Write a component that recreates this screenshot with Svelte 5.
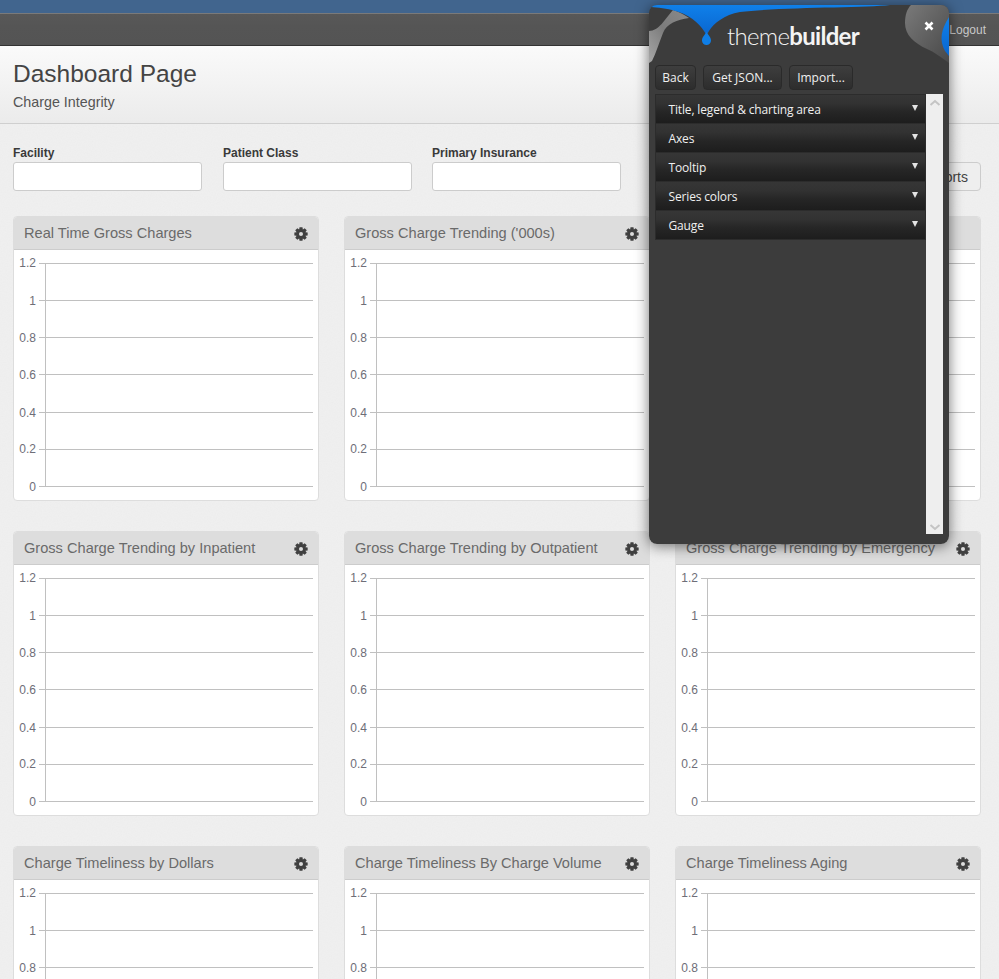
<script>
  const titles = [
    'Real Time Gross Charges', 'Gross Charge Trending (\'000s)', '',
    'Gross Charge Trending by Inpatient', 'Gross Charge Trending by Outpatient', 'Gross Charge Trending by Emergency',
    'Charge Timeliness by Dollars', 'Charge Timeliness By Charge Volume', 'Charge Timeliness Aging'
  ];
  const allTicks = [
    { label: '1.2', y: 14, base: 18 }, { label: '1', y: 51, base: 56 }, { label: '0.8', y: 88, base: 93 }, { label: '0.6', y: 125, base: 130 },
    { label: '0.4', y: 163, base: 168 }, { label: '0.2', y: 200, base: 204 }, { label: '0', y: 237, base: 242 }
  ];
  const cards = titles.map((title, i) => ({
    title,
    gear: i !== 2,
    ticks: i >= 6 ? allTicks.slice(0, 3) : allTicks
  }));
  const sections = ['Title, legend & charting area', 'Axes', 'Tooltip', 'Series colors', 'Gauge'];

  function gearPath() {
    const teeth = 8, cx = 8, cy = 8, ro = 7.8, ri = 5.6, hole = 2.3;
    let d = '';
    for (let t = 0; t < teeth; t++) {
      const a = (t / teeth) * Math.PI * 2;
      const w = 0.22, g = 0.17;
      const pts = [[ri, a - w - g], [ro, a - w], [ro, a + w], [ri, a + w + g]];
      for (const [r, an] of pts) {
        d += (d ? 'L' : 'M') + (cx + r * Math.sin(an)).toFixed(2) + ' ' + (cy - r * Math.cos(an)).toFixed(2);
      }
    }
    d += 'Z';
    d += `M${cx + hole} ${cy}A${hole} ${hole} 0 1 0 ${cx - hole} ${cy}A${hole} ${hole} 0 1 0 ${cx + hole} ${cy}Z`;
    return d;
  }
  const gear = gearPath();
</script>

<div class="page">
  <svg class="noise" width="999" height="979" aria-hidden="true">
    <filter id="grain">
      <feTurbulence type="fractalNoise" baseFrequency="0.8" numOctaves="2" seed="4" />
      <feColorMatrix values="0.33 0.33 0.33 0 0  0.33 0.33 0.33 0 0  0.33 0.33 0.33 0 0  0 0 0 0 1" />
    </filter>
    <rect width="999" height="979" filter="url(#grain)" />
  </svg>
  <div class="topbar"></div>
  <nav class="navbar"><span class="logout">Logout</span></nav>
  <header class="head">
    <h1>Dashboard Page</h1>
    <p>Charge Integrity</p>
  </header>

  <main class="content">
    <section class="filters">
      <div class="field"><span class="lab">Facility</span><div class="input"></div></div>
      <div class="field"><span class="lab">Patient Class</span><div class="input"></div></div>
      <div class="field"><span class="lab">Primary Insurance</span><div class="input"></div></div>
      <button class="reports">Reports</button>
    </section>

    <section class="grid">
      {#each cards as card}
        <article class="card">
          <div class="card-head">
            <span class="card-title">{card.title}</span>
            {#if card.gear}
              <svg class="gear" viewBox="0 0 16 16" width="14" height="14"><path d={gear} fill-rule="evenodd" /></svg>
            {/if}
          </div>
          <div class="card-body">
            <svg class="chart" width="304" height="251" viewBox="0 0 304 251">
              <line class="rule" x1="31.5" x2="31.5" y1="14" y2="237" />
              {#each card.ticks as t}
                <line class="rule" x1="25" x2="299" y1={t.y + 0.5} y2={t.y + 0.5} />
                <text class="tick" x="22" y={t.base}>{t.label}</text>
              {/each}
            </svg>
          </div>
        </article>
      {/each}
    </section>
  </main>

  <aside class="tb">
    <svg class="tb-art" width="300" height="70" viewBox="0 0 300 70">
      <defs>
        <linearGradient id="blue" x1="0" y1="0" x2="0" y2="1">
          <stop offset="0" stop-color="#0f80ea" />
          <stop offset="1" stop-color="#0a66cf" />
        </linearGradient>
        <linearGradient id="g1" x1="0" y1="1" x2="1" y2="0">
          <stop offset="0" stop-color="#a8a8a8" />
          <stop offset="0.5" stop-color="#7c7c7c" />
          <stop offset="1" stop-color="#8a8a8a" />
        </linearGradient>
        <linearGradient id="g2" x1="0" y1="0" x2="1" y2="1">
          <stop offset="0" stop-color="#7a7a7a" />
          <stop offset="1" stop-color="#484848" />
        </linearGradient>
      </defs>
      <path d="M0 26C10 26 16 14 24 5C32 8 36 10 40 13C28 15 18 18 14 28C10 38 7 48 3 56L0 58Z" fill="url(#g1)" />
      <path d="M262 0H300V58C292 52 285 47 278 44C265 38 256 30 256 18C256 10 258 4 262 0Z" fill="url(#g2)" />
      <path d="M300 12C292 25 290 35 296 46L300 51Z" fill="url(#blue)" />
      <path d="M0 0H241C215 3 130 2 91 7C75 10 65 18 60 26L57.5 30L55 26C50 18 40 9 23 5C15 3 5 2 0 2Z" fill="url(#blue)" />
      <path d="M57.5 27C59 30 62 32 62 35.500A4.500 4.500 0 0 1 53 35.500C53 32 56 30 57.500 27Z" fill="#0f7ee6" />
    </svg>
    <div class="tb-logo"><span class="thin">theme</span><span class="bold">builder</span></div>
    <svg class="tb-close" width="10" height="10" viewBox="0 0 10 10"><path d="M1.500 1.500L8.500 8.500M8.500 1.500L1.500 8.500" stroke="#fff" stroke-width="2.600" /></svg>

    <div class="tb-actions">
      <button class="tb-btn back">Back</button>
      <button class="tb-btn json">Get JSON...</button>
      <button class="tb-btn imp">Import...</button>
    </div>

    <div class="tb-main">
      <div class="tb-list">
        {#each sections as s}
          <div class="tb-row"><span>{s}</span><i class="tri"></i></div>
        {/each}
      </div>
      <div class="tb-scroll">
        <svg width="12" height="8" viewBox="0 0 12 8"><path d="M1.500 6L6 2L10.500 6" fill="none" stroke="#c4c4c4" stroke-width="2" /></svg>
        <svg width="12" height="8" viewBox="0 0 12 8"><path d="M1.500 2L6 6L10.500 2" fill="none" stroke="#c4c4c4" stroke-width="2" /></svg>
      </div>
    </div>
  </aside>
</div>

<style>
  :global(html), :global(body) { margin: 0; overflow: hidden; }
  .page {
    position: relative;
    isolation: isolate;
    width: 999px;
    height: 979px;
    overflow: hidden;
    background: #f1f1f1;
    font-family: "Liberation Sans", Arial, sans-serif;
  }
  .noise { position: absolute; left: 0; top: 0; z-index: -1; opacity: 0.035; }
  .topbar {
    height: 13px;
    background: #41658e;
    border-bottom: 1px solid #2f3d4c;
  }
  .navbar {
    height: 31px;
    background: linear-gradient(#585858, #555 40%, #545454);
    border-top: 1px solid #7a7a7a;
    border-bottom: 1px solid #333;
    margin-top: -1px;
    display: flex;
    justify-content: flex-end;
    align-items: center;
    padding-right: 13px;
  }
  .logout { color: #c8c8c8; font-size: 12px; }
  .head {
    height: 78px;
    box-sizing: border-box;
    padding: 14px 13px 0;
    background: linear-gradient(#fafafa, #ebebeb);
    border-bottom: 1px solid #cfcfcf;
  }
  h1 { margin: 0; font-size: 24.5px; line-height: 28px; font-weight: 400; color: #444; }
  .head p { margin: 5px 0 0; font-size: 14.3px; line-height: 18px; color: #555; }
  .content { padding: 0 18px 0 13px; }
  .filters {
    display: flex;
    align-items: flex-end;
    gap: 21px;
    padding-top: 21px;
    height: 46px;
  }
  .field { width: 189px; display: flex; flex-direction: column; }
  .field + .field + .field { margin-left: -1px; }
  .lab { font-size: 12px; line-height: 16px; font-weight: 700; color: #3a3a3a; margin-bottom: 1px; }
  .input {
    height: 27px;
    background: #fff;
    border: 1px solid #ccc;
    border-radius: 3px;
  }
  .reports {
    margin-left: auto;
    height: 29px;
    width: 90px;
    padding: 0 12px;
    text-align: right;
    background: #eee;
    border: 1px solid #ccc;
    border-radius: 4px;
    font: 14px "Liberation Sans", Arial, sans-serif;
    color: #444;
  }
  .grid {
    display: grid;
    grid-template-columns: repeat(3, 306px);
    column-gap: 25px;
    row-gap: 30px;
    margin-top: 25px;
  }
  .card {
    height: 285px;
    box-sizing: border-box;
    border: 1px solid #ddd;
    border-radius: 4px;
    overflow: hidden;
    background: #fff;
  }
  .card-head {
    height: 33px;
    box-sizing: border-box;
    background: #dddddd;
    border-bottom: 1px solid #ccc;
    display: flex;
    align-items: center;
    justify-content: space-between;
    padding: 0 10px;
  }
  .card-title { font-size: 14.6px; color: #6a6a6a; }
  .gear { fill: #404040; margin-top: 2px; }
  .card-body { height: 250px; }
  .chart { display: block; margin-top: -1px; }
  .rule { stroke: #c0c0c0; stroke-width: 1; }
  .tick {
    font-family: "Liberation Sans", Arial, sans-serif;
    font-size: 12px;
    fill: #6e6e78;
    text-anchor: end;
  }

  .tb {
    position: absolute;
    left: 649px;
    top: 5px;
    z-index: 1;
    width: 300px;
    height: 539px;
    box-sizing: border-box;
    background: #3c3c3c;
    border-radius: 8px;
    overflow: hidden;
    padding-top: 60px;
    font-family: "Open Sans", "DejaVu Sans", sans-serif;
  }
  .page::after {
    content: "";
    position: absolute;
    left: 649px;
    top: 5px;
    width: 300px;
    height: 539px;
    border-radius: 8px;
    box-shadow: 0 2px 14px rgba(0,0,0,.55);
    pointer-events: none;
  }
  .tb-art { position: absolute; left: 0; top: 0; }
  .tb-logo {
    position: absolute;
    left: 78px;
    top: 13px;
    font-family: Lato, "Open Sans", sans-serif;
    font-size: 24px;
    letter-spacing: -0.7px;
    line-height: 36px;
    color: #f4f4f4;
  }
  .thin { font-weight: 300; }
  .bold { font-weight: 700; }
  .tb-close { position: absolute; left: 275px; top: 16px; }
  .tb-actions { display: flex; gap: 7px; padding-left: 6px; position: relative; }
  .tb-btn {
    height: 25px;
    padding: 0;
    background: linear-gradient(#3e3e3e, #2d2d2d);
    border: 1px solid #2a2a2a;
    border-radius: 4px;
    color: #f0f0f0;
    font: 12px "Open Sans", "DejaVu Sans", sans-serif;
  }
  .back { width: 41px; }
  .json { width: 79px; }
  .imp { width: 64px; }
  .tb-main { display: flex; margin: 4px 0 0 6px; height: 440px; position: relative; }
  .tb-list { width: 271px; height: 146px; box-sizing: border-box; border: 1px solid #2c2c2c; }
  .tb-row {
    height: 29px;
    box-sizing: border-box;
    padding: 0 7px 0 12.5px;
    display: flex;
    align-items: center;
    justify-content: space-between;
    background: linear-gradient(#363636, #323232 30%, #262626 60%, #1d1d1d);
    border-bottom: 1px solid #2c2c2c;
    color: #f0f0f0;
    font-size: 12px;
    letter-spacing: -0.15px;
  }
  .tri {
    width: 0; height: 0;
    border-left: 3.5px solid transparent;
    border-right: 3.5px solid transparent;
    border-top: 6px solid #e4e4e4;
    margin-top: -3px;
  }
  .tb-scroll {
    width: 17px;
    background: #eeeeee;
    display: flex;
    flex-direction: column;
    justify-content: space-between;
    align-items: center;
    padding: 5px 0 3px;
    box-sizing: border-box;
  }
</style>
